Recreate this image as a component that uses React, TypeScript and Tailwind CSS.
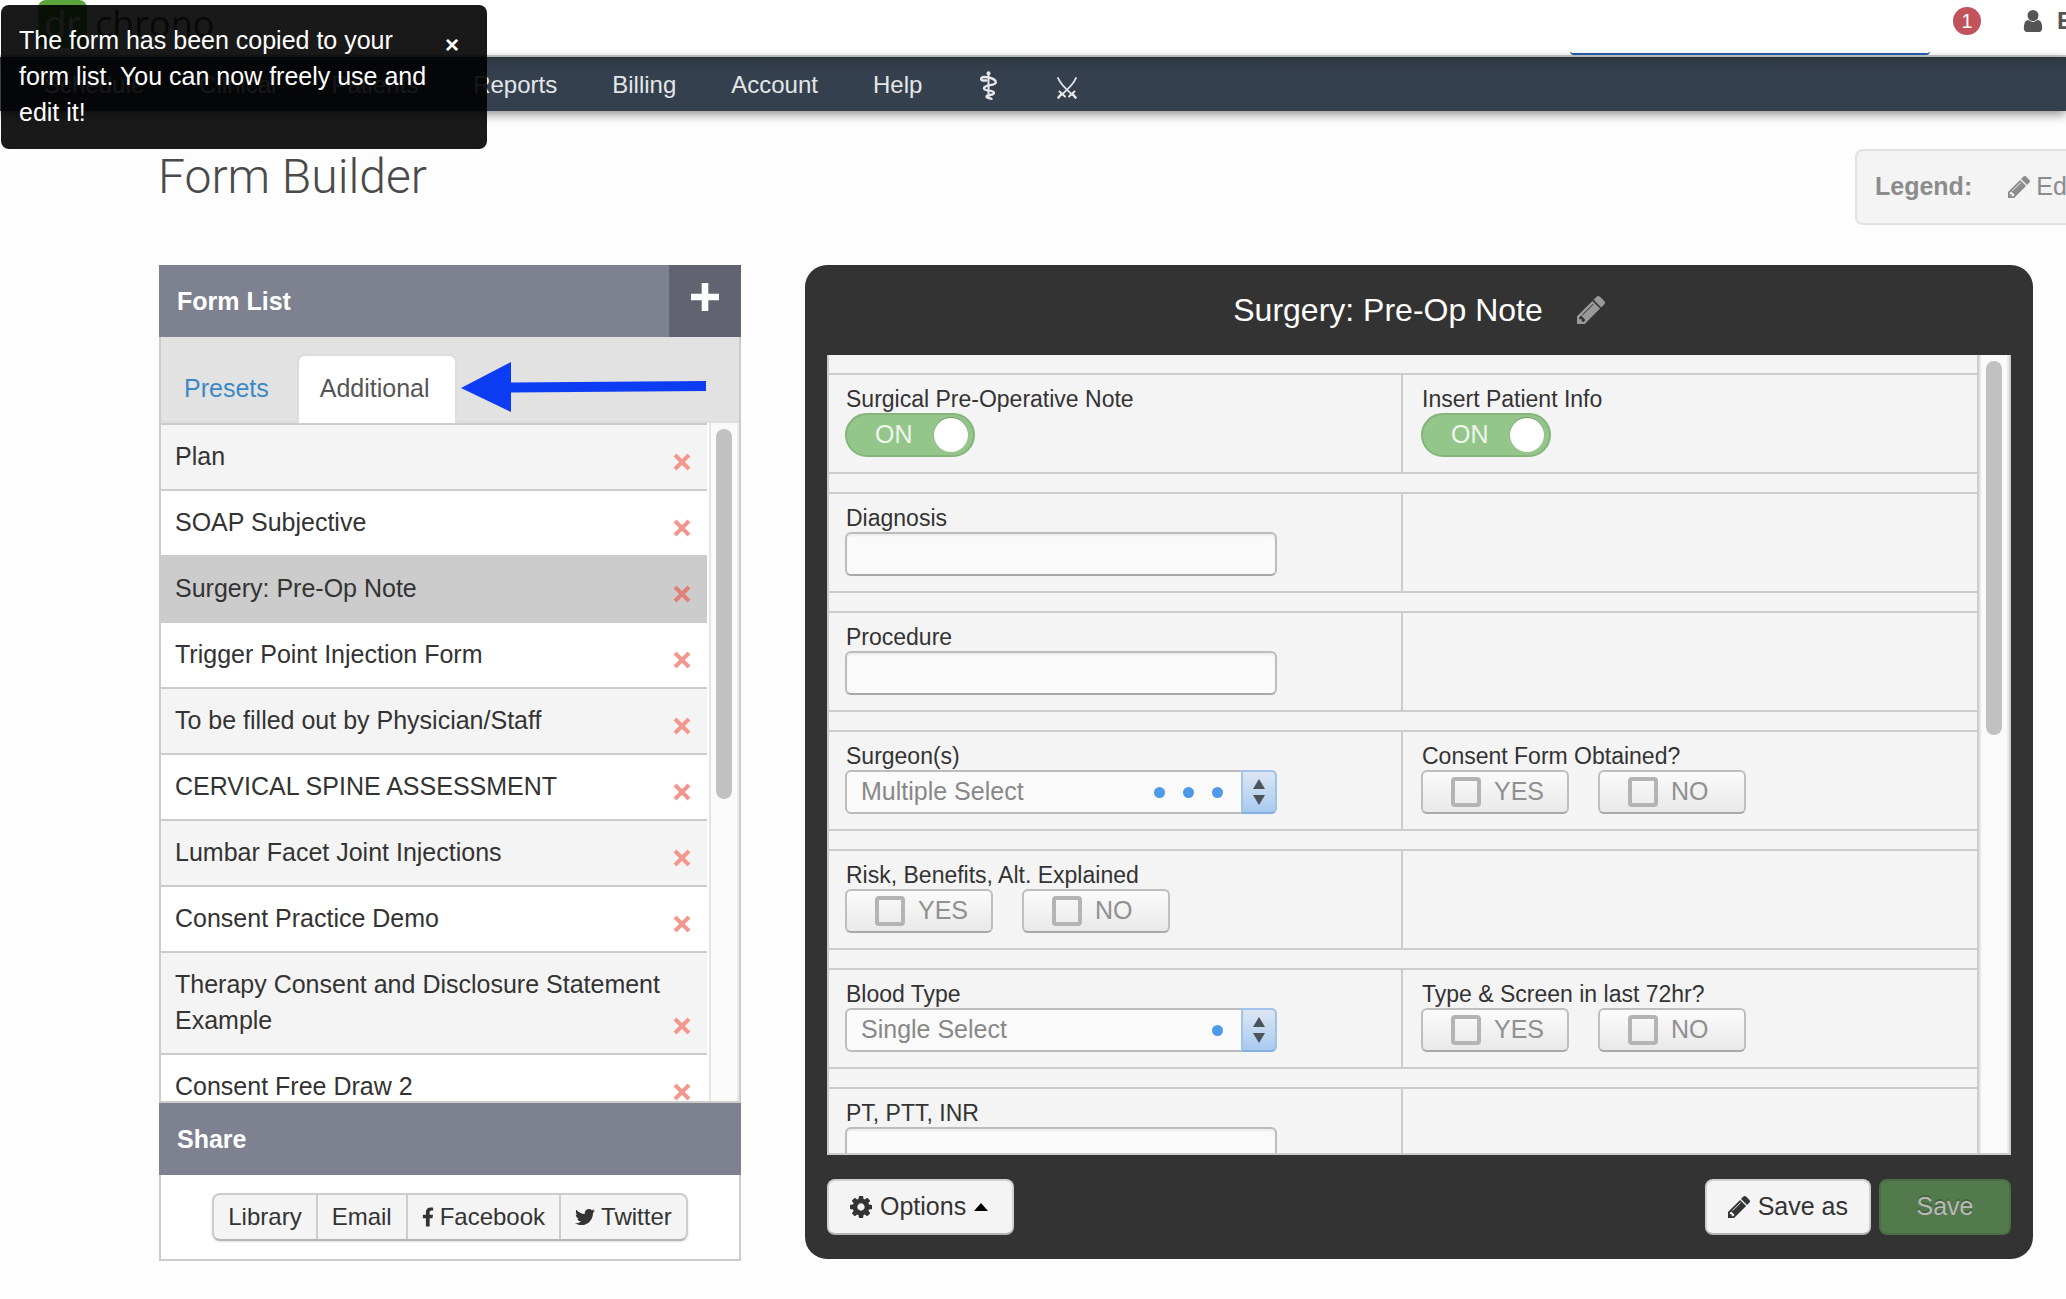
import type { ReactNode } from "react";
import clsx from "clsx";
import { FaFacebookF, FaTwitter } from "react-icons/fa";

const navItems = [
  "Schedule",
  "Clinical",
  "Patients",
  "Reports",
  "Billing",
  "Account",
  "Help",
];

const forms = [
  "Plan",
  "SOAP Subjective",
  "Surgery: Pre-Op Note",
  "Trigger Point Injection Form",
  "To be filled out by Physician/Staff",
  "CERVICAL SPINE ASSESSMENT",
  "Lumbar Facet Joint Injections",
  "Consent Practice Demo",
  "Therapy Consent and Disclosure Statement Example",
  "Consent Free Draw 2",
];

type Field = {
  label: string;
  type: "toggle" | "text" | "multi" | "single" | "yesno";
};

const rows: [Field, Field?][] = [
  [
    { label: "Surgical Pre-Operative Note", type: "toggle" },
    { label: "Insert Patient Info", type: "toggle" },
  ],
  [{ label: "Diagnosis", type: "text" }],
  [{ label: "Procedure", type: "text" }],
  [
    { label: "Surgeon(s)", type: "multi" },
    { label: "Consent Form Obtained?", type: "yesno" },
  ],
  [{ label: "Risk, Benefits, Alt. Explained", type: "yesno" }],
  [
    { label: "Blood Type", type: "single" },
    { label: "Type & Screen in last 72hr?", type: "yesno" },
  ],
  [{ label: "PT, PTT, INR", type: "text" }],
];

const PencilIcon = ({ className }: { className?: string }) => (
  <svg viewBox="128 149 1515 1515" className={className} fill="currentColor">
    <path d="M491 1536l91-91-235-235-91 91v107h128v128h107zm523-928q0-22-22-22-10 0-17 7l-542 542q-7 7-7 17 0 22 22 22 10 0 17-7l542-542q7-7 7-17zm-54-192l416 416-832 832h-416v-416zm683 96q0 53-37 90l-166 166-416-416 166-165q36-38 90-38 53 0 91 38l235 234q37 39 37 91z" />
  </svg>
);

const UserIcon = ({ className }: { className?: string }) => (
  <svg viewBox="256 128 1280 1536" className={className} fill="currentColor">
    <path d="M1536 1399q0 109-62.5 187t-150.5 78h-854q-88 0-150.5-78t-62.5-187q0-85 8.5-160.5t31.5-152 58.5-131 94-89 134.5-34.5q131 128 313 128t313-128q76 0 134.5 34.5t94 89 58.5 131 31.5 152 8.5 160.5zm-256-887q0 159-112.5 271.5t-271.5 112.5-271.5-112.5-112.5-271.5 112.5-271.5 271.5-112.5 271.5 112.5 112.5 271.5z" />
  </svg>
);

const CogIcon = ({ className }: { className?: string }) => (
  <svg viewBox="128 128 1536 1536" className={className} fill="currentColor">
    <path d="M1152 896q0-106-75-181t-181-75-181 75-75 181 75 181 181 75 181-75 75-181zm512-109v222q0 12-8 23t-20 13l-185 28q-19 54-39 91 35 50 107 138 10 12 10 25t-9 23q-27 37-99 108t-94 71q-12 0-26-9l-138-108q-44 23-91 38-16 136-29 186-7 28-36 28h-222q-14 0-24.5-8.5t-11.5-21.5l-28-184q-49-16-90-37l-141 107q-10 9-25 9-14 0-25-11-126-114-165-168-7-10-7-23 0-12 8-23 15-21 51-66.5t54-70.5q-27-50-41-99l-183-27q-13-2-21-12.5t-8-23.5v-222q0-12 8-23t19-13l186-28q14-46 39-92-40-57-107-138-10-12-10-24 0-10 9-23 26-36 98.5-107.5t94.5-71.5q13 0 26 10l138 107q44-23 91-38 16-136 29-186 7-28 36-28h222q14 0 24.5 8.5t11.5 21.5l28 184q49 16 90 37l142-107q9-9 24-9 13 0 25 10 129 119 165 170 7 8 7 22 0 12-8 23-15 21-51 66.5t-54 70.5q26 50 41 98l183 28q13 2 21 12.5t8 23.5z" />
  </svg>
);

// Rod of Asclepius: knobbed staff with a snake wound round it
const StaffIcon = ({ className }: { className?: string }) => (
  <svg
    viewBox="0 0 17 29"
    className={className}
    fill="none"
    stroke="currentColor"
    strokeLinecap="round"
  >
    <circle cx="8.500" cy="2.200" r="2" fill="currentColor" stroke="none" />
    <path d="M8.500 3v24" strokeWidth="2" />
    <path
      d="M6.500 9.500H3C0.500 9.500 0.500 6 4 6C8 6 15.800 7.500 15.800 11.500C15.800 14.800 4 13.500 4 17.200C4 20.500 14 18.800 14 22C14 24.500 6.500 23.500 6.500 25.600C6.500 27.500 10 26.500 11.500 28"
      strokeWidth="2.400"
    />
  </svg>
);

const SwordsIcon = ({ className }: { className?: string }) => (
  <svg
    viewBox="0 0 20 22"
    className={className}
    fill="none"
    stroke="currentColor"
    strokeLinecap="round"
  >
    <path d="M1 1C2.500 5 6 9.500 15.500 18M19 1C17.500 5 14 9.500 4.500 18" strokeWidth="1.800" />
    <path d="M4.500 17L1.500 20.500M15.500 17l3 3.500" strokeWidth="2.600" />
    <path d="M2.500 14.500l5.500 5M17.500 14.500l-5.500 5" strokeWidth="2" />
  </svg>
);

const Header = () => (
  <header>
    <div className="flex h-[57px] items-start justify-between overflow-hidden border-b-2 border-[#ccc] bg-white">
      <a
        href="#home"
        className="ml-[38px] flex h-12 items-center gap-2 font-['Open_Sans',sans-serif] text-[36px] leading-[48px] text-[#555]"
      >
        <span className="h-12 w-[49px] rounded-lg bg-[#5ba43c] text-center text-white">
          dr
        </span>
        chrono
      </a>
      <div className="flex shrink-0 self-stretch">
        <input
          type="search"
          aria-label="Search"
          className="w-[360px] rounded-sm border-b-2 border-[#2459a6] bg-transparent px-3 outline-none"
        />
        <div className="flex w-[136px] items-start overflow-hidden pt-[7px] pl-[23px] whitespace-nowrap">
          <span className="h-7 w-7 shrink-0 rounded-full bg-[#c0535c] text-center text-xl leading-7 text-white">
            1
          </span>
          <a
            href="#account"
            className="ml-[42px] flex items-center gap-[14px] text-2xl leading-7 font-bold text-[#555]"
          >
            <UserIcon className="h-[22px] w-5 shrink-0" />E
          </a>
        </div>
      </div>
    </div>
    <nav className="flex h-[54px] items-center gap-px bg-[#35404e] bg-linear-to-b from-[#2c3840] from-0% to-[#35404e] to-25% pt-[2px] pl-[17px] text-2xl text-[#e4e6e8] shadow-[0_3px_10px_rgba(0,0,0,0.45)]">
      {navItems.map((item) => (
        <a key={item} href={`#${item.toLowerCase()}`} className="px-[27px]">
          {item}
        </a>
      ))}
      <a href="#medical" aria-label="Medical" className="px-[30px]">
        <StaffIcon className="h-[29px] w-[17px]" />
      </a>
      <a href="#tools" aria-label="Tools" className="px-[29px] pt-[6px]">
        <SwordsIcon className="h-[22px] w-5" />
      </a>
    </nav>
  </header>
);

const Toast = () => (
  <div
    role="status"
    className="absolute top-[5px] left-px flex h-36 w-[486px] items-start justify-between rounded-lg bg-black/90 pt-[17px] pr-7 pl-[18px] text-[25px] leading-9 text-white"
  >
    <p className="w-[424px]">
      The form has been copied to your form list. You can now freely use and
      edit it!
    </p>
    <button type="button" aria-label="Close" className="text-2xl leading-[46px] font-bold">
      ×
    </button>
  </div>
);

const Scrollbar = ({ thumb }: { thumb: string }) => (
  <div className="flex w-[30px] shrink-0 justify-center border-x-2 border-l-[#e5e5e5] border-r-[#ebebeb] bg-[#fafafa] pt-[6px]">
    <div className={clsx("w-4 rounded-full bg-[#c1c1c1]", thumb)} />
  </div>
);

const FormList = () => (
  <aside className="w-[582px] shrink-0">
    <div className="flex h-[72px] items-center justify-between bg-[#7e8190] pl-[18px]">
      <h2 className="text-[25px] leading-9 font-bold text-white">Form List</h2>
      <button
        type="button"
        aria-label="Add form"
        className="flex h-[72px] w-[72px] justify-center bg-[#616370] pt-[18px]"
      >
        <svg viewBox="0 0 28 28" className="h-7 w-7" fill="#fff">
          <path d="M10.7 0h6.6v10.7H28v6.6H17.3V28h-6.6V17.3H0v-6.6h10.7z" />
        </svg>
      </button>
    </div>

    <div className="border-x-2 border-b-2 border-[#ccc]">
      <div className="flex h-[86px] items-end border-b-2 border-[#ddd] bg-[#e2e2e2] pl-[7px] text-[25px] leading-9">
        <a href="#presets" className="px-4 py-[15px] text-[#3c88c6]">
          Presets
        </a>
        <a
          href="#additional"
          className="-mb-[2px] ml-3 rounded-t-lg border-2 border-b-0 border-[#ddd] bg-white pt-[14px] pr-[25px] pb-[17px] pl-[21px] text-[#555]"
        >
          Additional
        </a>
        <svg viewBox="0 0 245 50" className="mb-[9px] ml-1 h-[50px] w-[245px]" fill="#0d3cf5">
          <path d="M0 26 50 0v20.500L245 19v10L50 30.500V50z" />
        </svg>
      </div>

      <div className="flex h-[678px] overflow-hidden">
        <ul className="mr-[2px] flex-1">
          {forms.map((form, i) => (
            <li
              key={form}
              className={clsx(
                "flex items-end justify-between border-t-2 border-[#ccc] pt-[13px] pr-4 pb-[15px] pl-[14px] text-[25px] leading-9 text-[#333]",
                i === 2 ? "bg-[#ccc]" : i % 2 === 0 ? "bg-[#f4f4f4]" : "bg-white",
              )}
            >
              <span>{form}</span>
              <button
                type="button"
                aria-label={`Remove ${form}`}
                className={clsx(
                  "mb-[3px]",
                  i === 2 ? "text-[#e08078]" : "text-[#f3968d]",
                )}
              >
                <svg
                  viewBox="0 0 18 18"
                  className="h-[18px] w-[18px]"
                  stroke="currentColor"
                  strokeWidth="4"
                >
                  <path d="M2 2l14 14M16 2L2 16" />
                </svg>
              </button>
            </li>
          ))}
        </ul>
        <Scrollbar thumb="h-[370px]" />
      </div>
    </div>

    <h2 className="flex h-[72px] items-center bg-[#7e8190] pl-[18px] text-[25px] leading-9 font-bold text-white">
      Share
    </h2>
    <div className="flex h-[86px] items-center justify-center border-2 border-t-0 border-[#ccc] bg-white">
      <div className="flex h-12 divide-x-2 divide-[#ccc] overflow-hidden rounded-lg border-2 border-[#ccc] border-b-[#b5b5b5] bg-[#f4f4f4] text-2xl text-[#333] shadow-sm">
        <button type="button" className="px-[14px]">
          Library
        </button>
        <button type="button" className="px-[14px]">
          Email
        </button>
        <button type="button" className="flex items-center gap-[6px] px-[14px]">
          <FaFacebookF className="h-[22px] w-3" />
          Facebook
        </button>
        <button type="button" className="flex items-center gap-[6px] px-[14px]">
          <FaTwitter className="h-5 w-5" />
          Twitter
        </button>
      </div>
    </div>
  </aside>
);

const Toggle = ({ id }: { id: string }) => (
  <div className="relative flex h-11 w-[130px] items-center justify-between rounded-full border-2 border-[#84b47a] bg-[#94c58b] pr-[5px] pl-7">
    <span className="text-[25px] font-medium text-[#eef7ec]">ON</span>
    <span className="h-[34px] w-[34px] rounded-full bg-white shadow-[0_-1px_1px_rgba(0,0,0,0.2)]" />
    <input
      id={id}
      type="checkbox"
      role="switch"
      defaultChecked
      className="absolute inset-0 opacity-0"
    />
  </div>
);

const SelectBox = ({ id, multiple }: { id: string; multiple: boolean }) => (
  <div className="relative h-11 w-[432px]">
    <select
      id={id}
      className="h-11 w-full appearance-none rounded-md border-2 border-[#bcbcbc] bg-[#fafafa] pl-[14px] text-[25px] text-[#888]"
    >
      <option>{multiple ? "Multiple Select" : "Single Select"}</option>
    </select>
    <div className="pointer-events-none absolute inset-y-0 right-0 flex items-center">
      <div className="mr-[18px] flex gap-[18px]">
        {Array.from({ length: multiple ? 3 : 1 }, (_, i) => (
          <span key={i} className="h-[11px] w-[11px] rounded-full bg-[#4f9ae8]" />
        ))}
      </div>
      <div className="flex h-11 w-9 items-center justify-center rounded-r-md border-2 border-[#a0c3ea] border-b-[#84b0e0] bg-linear-to-b from-[#dde6f2] to-[#a8caf0]">
        <svg viewBox="0 0 12 26" className="h-[26px] w-3" fill="#4c535c">
          <path d="M6 0l6 10H0zM6 26l6-10H0z" />
        </svg>
      </div>
    </div>
  </div>
);

const YesNo = ({ id }: { id: string }) => (
  <div className="flex gap-[29px]">
    {["YES", "NO"].map((option) => (
      <label
        key={option}
        htmlFor={`${id}-${option}`}
        className="flex h-11 w-[148px] items-center gap-[13px] rounded-md border-2 border-[#bebebe] border-b-[#a8a8a8] bg-linear-to-b from-[#fbfbfb] to-[#e9e9e9] pl-7 text-[25px] text-[#909090]"
      >
        <input
          id={`${id}-${option}`}
          type="checkbox"
          className="h-[30px] w-[30px] appearance-none rounded-sm border-4 border-[#b4b4b4]"
        />
        {option}
      </label>
    ))}
  </div>
);

const FieldCell = ({ field, id }: { field: Field; id: string }) => {
  let control: ReactNode;

  if (field.type === "toggle") {
    control = <Toggle id={id} />;
  } else if (field.type === "text") {
    control = (
      <input
        id={id}
        type="text"
        className="block h-11 w-[432px] rounded-md border-2 border-[#bcbcbc] border-b-[#a8a8a8] bg-[#fafafa] px-3 text-[23px] shadow-[inset_0_2px_2px_rgba(0,0,0,0.06)]"
      />
    );
  } else if (field.type === "yesno") {
    control = <YesNo id={id} />;
  } else {
    control = <SelectBox id={id} multiple={field.type === "multi"} />;
  }

  return (
    <>
      {field.type === "yesno" ? (
        <p className="pl-px leading-7">{field.label}</p>
      ) : (
        <label htmlFor={id} className="block pl-px leading-7">
          {field.label}
        </label>
      )}
      {control}
    </>
  );
};

const FormPreview = () => (
  <main className="min-w-0 flex-1 rounded-[22px] bg-[#333] px-[22px] pb-6">
    <div className="flex h-[90px] items-center justify-center gap-[34px]">
      <h2 className="text-[32px] text-white">Surgery: Pre-Op Note</h2>
      <button type="button" aria-label="Rename form" className="text-[#999]">
        <PencilIcon className="h-7 w-7" />
      </button>
    </div>

    <div className="flex h-[800px] overflow-hidden border-x-2 border-b-2 border-[#ccc] bg-[#f4f4f4]">
      <div className="flex flex-1 flex-col gap-[18px] border-r-2 border-[#ccc] pt-[18px] text-[23px] text-[#333]">
        {rows.map(([left, right], i) => (
          <div
            key={left.label}
            className="grid h-[101px] shrink-0 grid-cols-2 divide-x-2 divide-[#ccc] border-y-2 border-[#ccc]"
          >
            <div className="pt-[10px] pl-4">
              <FieldCell field={left} id={`field-${i}-left`} />
            </div>
            <div className="pt-[10px] pl-[18px]">
              {right && <FieldCell field={right} id={`field-${i}-right`} />}
            </div>
          </div>
        ))}
      </div>
      <Scrollbar thumb="h-[374px]" />
    </div>

    <div className="mt-6 flex h-14 gap-2 text-[25px] text-[#333]">
      <button
        type="button"
        className="mr-auto flex items-center gap-2 rounded-lg border-2 border-[#d0d0d0] border-b-[#b5b5b5] bg-[#f4f4f4] pr-6 pl-[21px]"
      >
        <CogIcon className="h-[22px] w-[22px]" />
        Options
        <svg viewBox="0 0 14 8" className="h-2 w-[14px]">
          <path d="M7 0l7 8H0z" />
        </svg>
      </button>
      <button
        type="button"
        className="flex items-center gap-2 rounded-lg border-2 border-[#d0d0d0] border-b-[#b5b5b5] bg-[#f4f4f4] px-[21px]"
      >
        <PencilIcon className="h-[22px] w-[22px]" />
        Save as
      </button>
      <button
        type="button"
        className="w-[132px] rounded-lg border-2 border-[#4a6e43] bg-[#537a4c] text-[#b8b8b8] text-shadow-[0_-2px_0_rgba(0,0,0,0.2)]"
      >
        Save
      </button>
    </div>
  </main>
);

export default function App() {
  return (
    <div className="relative min-h-screen overflow-hidden bg-[#fdfdfd] font-['Liberation_Sans',Arial,sans-serif]">
      <Header />

      <div className="flex items-start justify-between pt-[38px] pb-10 pl-[158px]">
        <h1 className="font-[Roboto,sans-serif] text-[48px] leading-[56px] font-light text-[#4a4a4a]">
          Form Builder
        </h1>
        <div className="flex h-[76px] w-[211px] shrink-0 items-center overflow-hidden rounded-l-lg border-2 border-r-0 border-[#e2e2e2] bg-[#f4f4f4] pl-[18px] text-[25px] whitespace-nowrap text-[#8c8c8c]">
          <strong>Legend:</strong>
          <PencilIcon className="mr-[6px] ml-9 h-[22px] w-[22px] shrink-0" />
          Edit
        </div>
      </div>

      <div className="flex items-start gap-16 pr-[33px] pb-10 pl-[159px]">
        <FormList />
        <FormPreview />
      </div>

      <Toast />
    </div>
  );
}
